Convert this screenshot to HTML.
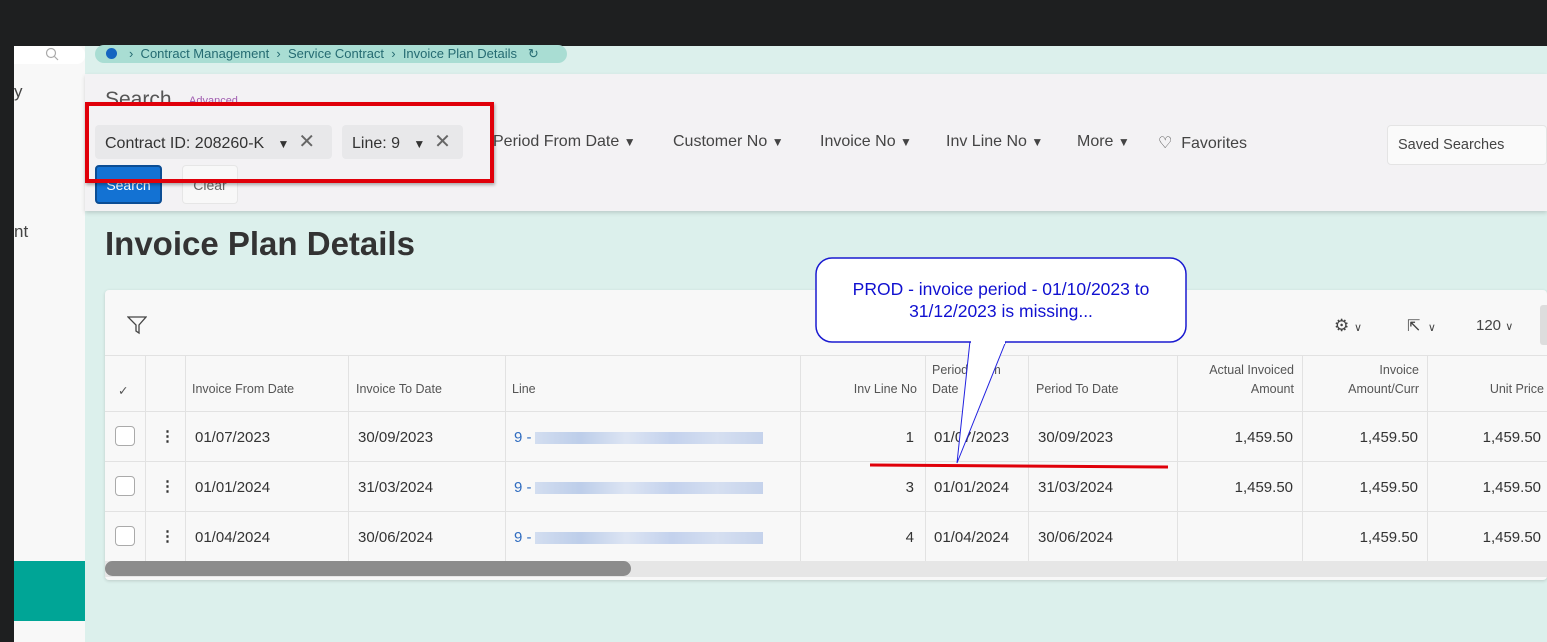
<!DOCTYPE html>
<html><head><style>
*{box-sizing:border-box;margin:0;padding:0}
body{width:1547px;height:642px;overflow:hidden;background:#1e1f20;font-family:"Liberation Sans",sans-serif;position:relative;color:#333}
.abs{position:absolute}
.side{left:14px;top:46px;width:71px;height:596px;background:#f8f8f8}
.main{left:85px;top:46px;width:1462px;height:596px;background:#dcf0ec}
.crumb{left:95px;top:45px;width:472px;height:18px;background:#a9ddd3;border-radius:9px;font-size:13px;color:#256b72;line-height:18px;padding-left:34px;white-space:nowrap}
.panel{left:85px;top:74px;width:1462px;height:137px;background:#f3f2f4;box-shadow:0 2px 4px rgba(0,0,0,.15)}
.chip{background:#e8e8ea;border-radius:4px;height:34px;top:125px;font-size:16px;line-height:34px;padding-left:10px;color:#333}
.flt{top:133px;font-size:16px;color:#444}
.card{left:105px;top:290px;width:1442px;height:290px;background:#f8f8f8;border-radius:4px;box-shadow:0 1px 3px rgba(0,0,0,.15)}
.vl{width:1px;background:#e2e2e2;top:355px;height:206px}
.hl{height:1px;background:#e2e2e2;left:105px;width:1442px}
.th{font-size:12.5px;color:#555;line-height:19px}
.td{font-size:15px;color:#333}
.r{text-align:right}
.cb{width:20px;height:20px;border:1px solid #aaa;border-radius:4px;background:#fff}
.blur{height:12px;width:228px;background:linear-gradient(90deg,#c9d7ee,#aec3e6 20%,#d6e0f2 40%,#b6c8ea 60%,#cdd9ef 80%,#b8c9e8);opacity:.8}
</style></head><body>
<div class="abs side"></div>
<div class="abs" style="left:14px;top:46px;width:71px;height:18px;background:#fff;border-radius:0 8px 8px 0"></div>
<svg class="abs" style="left:45px;top:47px" width="14" height="14" viewBox="0 0 14 14"><circle cx="6" cy="6" r="4.5" fill="none" stroke="#aaa" stroke-width="1.2"/><path d="M9.5 9.5L13 13" stroke="#aaa" stroke-width="1.2"/></svg>
<div class="abs" style="left:14px;top:82px;font-size:17px;color:#444">y</div>
<div class="abs" style="left:14px;top:222px;font-size:17px;color:#444">nt</div>
<div class="abs" style="left:14px;top:561px;width:71px;height:60px;background:#00a596"></div>
<div class="abs main"></div>
<div class="abs crumb">›&nbsp; Contract Management &nbsp;›&nbsp; Service Contract &nbsp;›&nbsp; Invoice Plan Details &nbsp;&nbsp;↻</div>
<div class="abs" style="left:106px;top:48px;width:11px;height:11px;border-radius:50%;background:#1565c0"></div>
<div class="abs panel"></div>
<div class="abs" style="left:105px;top:88px;font-size:21px;color:#555">Search</div>
<div class="abs" style="left:189px;top:95px;font-size:11px;color:#a05cb0">Advanced</div>
<div class="abs chip" style="left:95px;width:237px">Contract ID: 208260-K &nbsp;&nbsp;<span style="font-size:12px">▼</span> &nbsp;<span style="font-size:20px;color:#666">✕</span></div>
<div class="abs chip" style="left:342px;width:121px">Line: 9 &nbsp;&nbsp;<span style="font-size:12px">▼</span> &nbsp;<span style="font-size:20px;color:#666">✕</span></div>
<div class="abs flt" style="left:493px">Period From Date <span style="font-size:12px">▼</span></div>
<div class="abs flt" style="left:673px">Customer No <span style="font-size:12px">▼</span></div>
<div class="abs flt" style="left:820px">Invoice No <span style="font-size:12px">▼</span></div>
<div class="abs flt" style="left:946px">Inv Line No <span style="font-size:12px">▼</span></div>
<div class="abs flt" style="left:1077px">More <span style="font-size:12px">▼</span></div>
<div class="abs flt" style="left:1158px">♡ &nbsp;Favorites</div>
<div class="abs" style="left:1387px;top:125px;width:160px;height:40px;background:#fafafa;border:1px solid #e4e4e4;border-radius:4px;font-size:14.5px;line-height:38px;padding-left:10px;color:#444">Saved Searches</div>
<div class="abs" style="left:95px;top:165px;width:67px;height:39px;background:#1372d3;border:2px solid #0b4d94;border-radius:4px;color:#fff;font-size:14px;line-height:36px;text-align:center">Search</div>
<div class="abs" style="left:182px;top:165px;width:56px;height:39px;background:#f8f8f8;border:1px solid #e6e6e6;border-radius:4px;color:#666;font-size:14px;line-height:38px;text-align:center">Clear</div>
<div class="abs" style="left:85px;top:102px;width:409px;height:81px;border:4px solid #e0000a;box-shadow:1px 2px 3px rgba(0,0,0,.3)"></div>
<div class="abs" style="left:105px;top:225px;font-size:33px;font-weight:bold;color:#333">Invoice Plan Details</div>
<div class="abs card"></div>
<svg class="abs" style="left:127px;top:315px" width="20" height="20" viewBox="0 0 20 20"><path d="M1 2h18l-7 8v8l-3-2v-6z" fill="none" stroke="#444" stroke-width="1.3"/></svg>
<div class="abs" style="left:1334px;top:316px;font-size:17px;color:#444">⚙ <span style="font-size:11px">∨</span></div>
<div class="abs" style="left:1407px;top:316px;font-size:16px;color:#444">⇱ <span style="font-size:11px">&nbsp;∨</span></div>
<div class="abs" style="left:1476px;top:317px;font-size:15px;color:#444">120 <span style="font-size:11px">∨</span></div>
<div class="abs" style="left:1540px;top:305px;width:7px;height:40px;background:#ddd;border-radius:3px 0 0 3px"></div>
<div class="abs hl" style="top:355px"></div><div class="abs hl" style="top:411px"></div><div class="abs hl" style="top:461px"></div><div class="abs hl" style="top:511px"></div>
<div class="abs vl" style="left:145px"></div><div class="abs vl" style="left:185px"></div><div class="abs vl" style="left:348px"></div><div class="abs vl" style="left:505px"></div><div class="abs vl" style="left:800px"></div><div class="abs vl" style="left:925px"></div><div class="abs vl" style="left:1028px"></div><div class="abs vl" style="left:1177px"></div><div class="abs vl" style="left:1302px"></div><div class="abs vl" style="left:1427px"></div>
<div class="abs th" style="left:118px;top:382px">✓</div>
<div class="abs th" style="left:192px;top:380px">Invoice From Date</div>
<div class="abs th" style="left:356px;top:380px">Invoice To Date</div>
<div class="abs th" style="left:512px;top:380px">Line</div>
<div class="abs th r" style="left:800px;width:117px;top:380px">Inv Line No</div>
<div class="abs th" style="left:932px;top:361px">Period From<br>Date</div>
<div class="abs th" style="left:1036px;top:380px">Period To Date</div>
<div class="abs th r" style="left:1177px;width:117px;top:361px">Actual Invoiced<br>Amount</div>
<div class="abs th r" style="left:1302px;width:117px;top:361px">Invoice<br>Amount/Curr</div>
<div class="abs th r" style="left:1427px;width:117px;top:380px">Unit Price</div>
<div class="abs cb" style="left:115px;top:426px"></div><div class="abs cb" style="left:115px;top:476px"></div><div class="abs cb" style="left:115px;top:526px"></div>
<div class="abs td" style="left:160px;top:427px;font-weight:bold">⋮</div><div class="abs td" style="left:160px;top:477px;font-weight:bold">⋮</div><div class="abs td" style="left:160px;top:527px;font-weight:bold">⋮</div>
<div class="abs td" style="left:195px;top:429px">01/07/2023</div><div class="abs td" style="left:195px;top:479px">01/01/2024</div><div class="abs td" style="left:195px;top:529px">01/04/2024</div>
<div class="abs td" style="left:358px;top:429px">30/09/2023</div><div class="abs td" style="left:358px;top:479px">31/03/2024</div><div class="abs td" style="left:358px;top:529px">30/06/2024</div>
<div class="abs td" style="left:514px;top:429px;color:#2f6cc0">9 -</div><div class="abs blur" style="left:535px;top:432px"></div>
<div class="abs td" style="left:514px;top:479px;color:#2f6cc0">9 -</div><div class="abs blur" style="left:535px;top:482px"></div>
<div class="abs td" style="left:514px;top:529px;color:#2f6cc0">9 -</div><div class="abs blur" style="left:535px;top:532px"></div>
<div class="abs td r" style="left:800px;width:114px;top:429px">1</div><div class="abs td r" style="left:800px;width:114px;top:479px">3</div><div class="abs td r" style="left:800px;width:114px;top:529px">4</div>
<div class="abs td" style="left:934px;top:429px">01/07/2023</div><div class="abs td" style="left:934px;top:479px">01/01/2024</div><div class="abs td" style="left:934px;top:529px">01/04/2024</div>
<div class="abs td" style="left:1038px;top:429px">30/09/2023</div><div class="abs td" style="left:1038px;top:479px">31/03/2024</div><div class="abs td" style="left:1038px;top:529px">30/06/2024</div>
<div class="abs td r" style="left:1177px;width:116px;top:429px">1,459.50</div><div class="abs td r" style="left:1177px;width:116px;top:479px">1,459.50</div>
<div class="abs td r" style="left:1302px;width:116px;top:429px">1,459.50</div><div class="abs td r" style="left:1302px;width:116px;top:479px">1,459.50</div><div class="abs td r" style="left:1302px;width:116px;top:529px">1,459.50</div>
<div class="abs td r" style="left:1427px;width:114px;top:429px">1,459.50</div><div class="abs td r" style="left:1427px;width:114px;top:479px">1,459.50</div><div class="abs td r" style="left:1427px;width:114px;top:529px">1,459.50</div>
<div class="abs" style="left:105px;top:561px;width:1442px;height:16px;background:#e6e6e6"></div>
<div class="abs" style="left:105px;top:561px;width:526px;height:15px;background:#8c8c8c;border-radius:8px"></div>
<svg class="abs" style="left:0;top:0" width="1547" height="642">
<line x1="870" y1="465" x2="1168" y2="467" stroke="#e0000a" stroke-width="3"/>
<path d="M970 341 L957 463 L1006 341" fill="#fff" stroke="#2020e0" stroke-width="1"/>
<rect x="816" y="258" width="370" height="84" rx="16" fill="#fff" stroke="#1a1ad0" stroke-width="1.5"/>
<rect x="971" y="338" width="34" height="6" fill="#fff"/>
<text x="1001" y="295" font-family="Liberation Sans" font-size="17.5" fill="#1010d0" text-anchor="middle">PROD - invoice period - 01/10/2023 to</text>
<text x="1001" y="317" font-family="Liberation Sans" font-size="17.5" fill="#1010d0" text-anchor="middle">31/12/2023 is missing...</text>
</svg>
</body></html>
